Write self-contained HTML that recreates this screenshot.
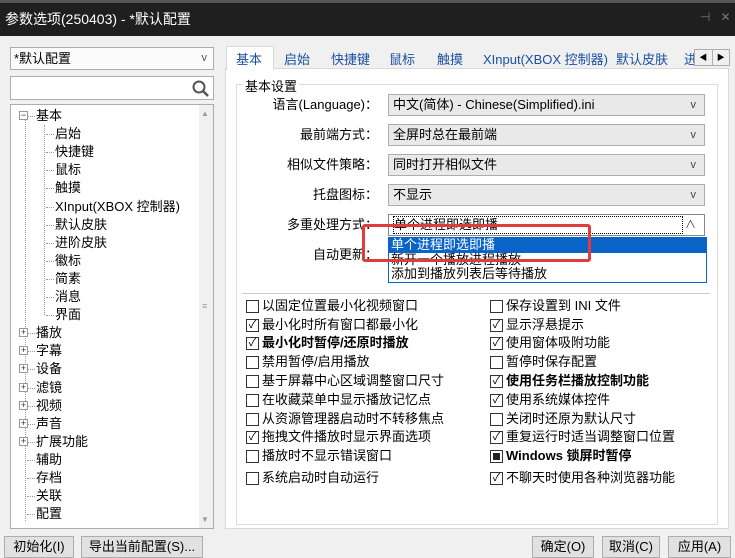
<!DOCTYPE html><html><head><meta charset="utf-8"><style>
*{margin:0;padding:0;box-sizing:border-box}
body{width:735px;height:556px;overflow:hidden;background:#f0f0f0;font-family:"Liberation Sans","Noto Sans CJK SC",sans-serif;font-size:13px;color:#000;position:relative}
.a{position:absolute;white-space:nowrap}
.box{position:absolute;background:#fff;border:1px solid #adadad}
.cb{position:absolute;width:13px;height:13px;border:1px solid #333;background:#fff;font-size:11px;line-height:11px;text-align:center}
.btn{position:absolute;border:1px solid #adadad;background:#e1e1e1;text-align:center;line-height:20px;height:22px}
.lbl{position:absolute;right:357px;white-space:nowrap;line-height:22px}
.combo{position:absolute;left:388px;width:317px;height:22px;border:1px solid #adadad;background:#e9e9e9;padding-left:4px;line-height:20px}
.combo span{position:absolute;right:8px;top:0;font-size:11px;color:#444}
.t{position:absolute;white-space:nowrap;line-height:18px}
</style></head><body>
<div class="a" style="left:0;top:0;width:735px;height:36px;background:#1f1f1f;border-top:3px solid #555"></div>
<div class="a" style="left:5px;top:9px;color:#fff;font-size:14px">参数选项(250403) - *默认配置</div>
<div class="a" style="left:700px;top:10px;color:#777;font-size:12px">⊣&nbsp;&nbsp; ✕</div>

<div class="box" style="left:10px;top:47px;width:204px;height:23px;background:#fbfbfb;padding-left:3px;line-height:21px">*默认配置<span style="position:absolute;right:6px;font-size:11px;color:#555">v</span></div>
<div class="box" style="left:10px;top:76px;width:204px;height:24px"><svg style="position:absolute;right:4px;top:3px" width="17" height="17"><circle cx="7" cy="7" r="5.5" stroke="#555" stroke-width="2" fill="none"/><line x1="11" y1="11" x2="16" y2="16" stroke="#555" stroke-width="2.5"/></svg></div>
<div class="box" style="left:10px;top:104px;width:204px;height:425px;overflow:hidden">
<div class="a" style="left:188px;top:0;width:15px;height:424px;background:#f0f0f0"></div>
<div class="a" style="left:190px;top:4px;font-size:8px;color:#999">▲</div>
<div class="a" style="left:191px;top:196px;font-size:9px;color:#999">≡</div>
<div class="a" style="left:190px;top:410px;font-size:8px;color:#999">▼</div>
<div class="a" style="left:14px;top:12px;height:404px;border-left:1px dotted #999"></div>
<div class="a" style="left:33px;top:20px;height:190px;border-left:1px dotted #999"></div>
</div>
<div id="tree"></div>

<div class="a" style="left:225px;top:68px;width:504px;height:461px;background:#fff;border:1px solid #d9d9d9"></div>
<div class="a" style="left:226px;top:46px;width:48px;height:24px;background:#fff;border:1px solid #d9d9d9;border-bottom:none"></div>
<div class="a" style="left:236px;top:49px;color:#1a50a0">基本</div>
<div class="a" style="left:284px;top:49px;color:#1a50a0">启始</div>
<div class="a" style="left:331px;top:49px;color:#1a50a0">快捷键</div>
<div class="a" style="left:389px;top:49px;color:#1a50a0">鼠标</div>
<div class="a" style="left:437px;top:49px;color:#1a50a0">触摸</div>
<div class="a" style="left:483px;top:49px;color:#1a50a0">XInput(XBOX 控制器)</div>
<div class="a" style="left:616px;top:49px;color:#1a50a0">默认皮肤</div>
<div class="a" style="left:684px;top:49px;color:#1a50a0">进</div>
<div class="a" style="left:694px;top:49px;width:36px;height:17px;border:1px solid #adadad;background:#f0f0f0;font-size:8px;line-height:15px;display:flex"><span style="flex:1;text-align:center;border-right:1px solid #adadad">◀</span><span style="flex:1;text-align:center">▶</span></div>

<div class="a" style="left:236px;top:84px;width:482px;height:441px;border:1px solid #dcdcdc"></div>
<div class="a" style="left:243px;top:76px;background:#fff;padding:0 2px">基本设置</div>

<div class="lbl" style="top:94px">语言(Language)：</div><div class="combo" style="top:94px">中文(简体) - Chinese(Simplified).ini<span>v</span></div>
<div class="lbl" style="top:124px">最前端方式：</div><div class="combo" style="top:124px">全屏时总在最前端<span>v</span></div>
<div class="lbl" style="top:154px">相似文件策略：</div><div class="combo" style="top:154px">同时打开相似文件<span>v</span></div>
<div class="lbl" style="top:184px">托盘图标：</div><div class="combo" style="top:184px">不显示<span>v</span></div>
<div class="lbl" style="top:214px">多重处理方式：</div><div class="combo" style="top:214px;background:#fff;border-color:#888"><span style="position:static;color:#000;font-size:13px;border:1px dotted #000;display:inline-block;width:290px;line-height:16px;margin-top:1px">单个进程即选即播</span><span>∧</span></div>
<div class="lbl" style="top:244px">自动更新：</div>
<div class="a" style="left:388px;top:237px;width:319px;height:46px;background:#fff;border:1px solid #0a64c8;line-height:14.5px">
<div style="background:#0a64c8;color:#fff;padding-left:2px">单个进程即选即播</div><div style="padding-left:2px">新开一个播放进程播放</div><div style="padding-left:2px">添加到播放列表后等待播放</div></div>
<div class="a" style="left:362px;top:224px;width:229px;height:38px;border:3px solid #e03c3c;border-radius:3px"></div>
<div class="a" style="left:242px;top:293px;width:468px;border-top:1px solid #ccc"></div>
<div id="cbs"></div>

<div class="btn" style="left:4px;top:536px;width:70px">初始化(I)</div>
<div class="btn" style="left:81px;top:536px;width:122px">导出当前配置(S)...</div>
<div class="btn" style="left:532px;top:536px;width:62px">确定(O)</div>
<div class="btn" style="left:602px;top:536px;width:58px">取消(C)</div>
<div class="btn" style="left:668px;top:536px;width:63px">应用(A)</div>
<script>
var tr=[["基本",0,1],["启始",1],["快捷键",1],["鼠标",1],["触摸",1],["XInput(XBOX 控制器)",1],["默认皮肤",1],["进阶皮肤",1],["徽标",1],["简素",1],["消息",1],["界面",1],["播放",0,2],["字幕",0,2],["设备",0,2],["滤镜",0,2],["视频",0,2],["声音",0,2],["扩展功能",0,2],["辅助",0],["存档",0],["关联",0],["配置",0]];
var h="";tr.forEach(function(e,i){var y=107+i*18.1;var x=e[1]?55:36;
if(e[2])h+='<div class="a" style="left:19px;top:'+(y+4)+'px;width:9px;height:9px;border:1px solid #999;background:#fff;font-size:9px;line-height:7px;text-align:center;color:#333">'+(e[2]==1?'−':'+')+'</div>';
h+='<div class="a" style="left:'+(x-9)+'px;top:'+(y+9)+'px;width:8px;border-top:1px dotted #999"></div>';
h+='<div class="t" style="left:'+x+'px;top:'+y+'px">'+e[0]+'</div>';});
document.getElementById("tree").innerHTML=h;
var L=[["以固定位置最小化视频窗口",0],["最小化时所有窗口都最小化",1],["最小化时暂停/还原时播放",1,1],["禁用暂停/启用播放",0],["基于屏幕中心区域调整窗口尺寸",0],["在收藏菜单中显示播放记忆点",0],["从资源管理器启动时不转移焦点",0],["拖拽文件播放时显示界面选项",1],["播放时不显示错误窗口",0],["系统启动时自动运行",0]];
var R=[["保存设置到 INI 文件",0],["显示浮悬提示",1],["使用窗体吸附功能",1],["暂停时保存配置",0],["使用任务栏播放控制功能",1,1],["使用系统媒体控件",1],["关闭时还原为默认尺寸",0],["重复运行时适当调整窗口位置",1],["Windows 锁屏时暂停",2,1],["不聊天时使用各种浏览器功能",1]];
var ys=[306,325,343,362,381,400,419,437,456,478];h="";
function row(e,x,y){h+='<div class="cb" style="left:'+x+'px;top:'+(y-6)+'px">'+(e[1]==1?'✓':e[1]==2?'<div style="width:7px;height:7px;background:#222;margin:2px"></div>':'')+'</div>';
h+='<div class="t" style="left:'+(x+16)+'px;top:'+(y-9)+'px;'+(e[2]?'font-weight:bold':'')+'">'+e[0]+'</div>';}
L.forEach(function(e,i){row(e,246,ys[i])});R.forEach(function(e,i){row(e,490,ys[i])});
document.getElementById("cbs").innerHTML=h;
</script>
</body></html>
